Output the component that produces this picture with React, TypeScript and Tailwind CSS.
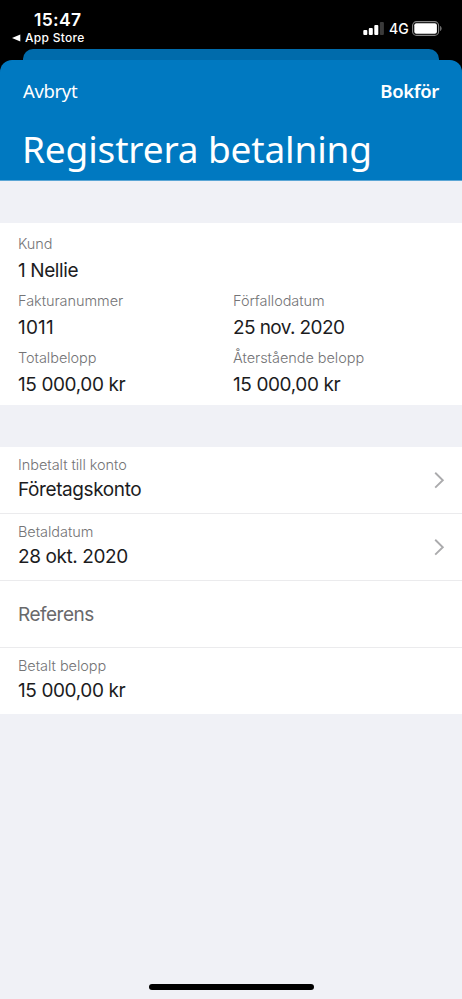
import clsx from "clsx";

const Chevron = () => {
  return (
    <svg width="12" height="18" viewBox="0 0 12 18" fill="none" className="mt-[3px] -mr-[2px] shrink-0">
      <path d="M1.2 1.8L8.8 9.2L1.2 16.6" stroke="#ababad" strokeWidth="1.9" />
    </svg>
  );
};

const StatusBar = () => {
  return (
    <div className="flex h-[49px] justify-between text-white">
      <div className="pl-3">
        <div className="pt-[10px] pl-[22px] text-[17.5px] leading-5 font-semibold tracking-[0.35px]">
          15:47
        </div>
        <div className="flex items-center text-[12px] leading-4 font-medium tracking-[0.3px]">
          <svg width="9" height="8" viewBox="0 0 9 8" className="mr-1">
            <path d="M0 4L8.3 0.6V7.4Z" fill="#fff" />
          </svg>
          App Store
        </div>
      </div>
      <div className="flex h-4 items-center mt-[20px] pr-[19px]">
        <svg width="21" height="13" viewBox="0 0 21 13">
          <rect x="0.3" y="8" width="4" height="5" rx="1" fill="#fff" />
          <rect x="5.8" y="6" width="4" height="7" rx="1" fill="#fff" />
          <rect x="11.3" y="3" width="4" height="10" rx="1" fill="#fff" />
          <rect x="16.9" y="0" width="4" height="13" rx="1" fill="#3a3a3a" />
        </svg>
        <span className="ml-[5px] w-[20px] text-[14px] font-medium">4G</span>
        <svg width="31" height="15" viewBox="0 0 31 15" className="ml-[3px]">
          <rect x="0.6" y="0.6" width="26" height="13.8" rx="4" stroke="#858585" strokeWidth="1.1" fill="none" />
          <rect x="2.3" y="2.3" width="22.6" height="10.4" rx="2" fill="#fff" />
          <path d="M28.2 5C30 5.6 30 9.4 28.2 10Z" fill="#858585" />
        </svg>
      </div>
    </div>
  );
};

type FieldProps = {
  label: string;
  value: string;
  compact?: boolean;
  valueClass?: string;
};

const Field = ({ label, value, compact, valueClass = "tracking-[-0.4px]" }: FieldProps) => {
  return (
    <div>
      <div className="text-[14.5px] leading-5 font-light tracking-[-0.05px] text-[#747476]">
        {label}
      </div>
      <div
        className={clsx(
          "text-[19px] leading-6 text-[#1c1c1e]",
          compact ? "mt-[3px]" : "mt-[5px]",
          valueClass
        )}
      >
        {value}
      </div>
    </div>
  );
};

const App = () => {
  return (
    <div className="flex h-[999px] w-[462px] flex-col overflow-hidden bg-black font-['Inter',sans-serif]">
      <StatusBar />
      <div className="mx-[23px] h-[11px] shrink-0 rounded-t-[10px] bg-[#006bab]" />
      <div className="flex grow flex-col bg-black">
        <header className="h-[121px] shrink-0 rounded-t-[12px] border-b border-[#5ba6d5] bg-[#0079c1] px-[23px] font-['Noto_Sans',sans-serif] text-white">
          <div className="flex justify-between pt-[18px] text-[18.5px] leading-[26px] tracking-[-0.35px]">
            <button>Avbryt</button>
            <button className="font-semibold">Bokför</button>
          </div>
          <h1 className="mt-[19px] -ml-px text-[37px] leading-[52px] font-[380] tracking-[-0.15px] whitespace-nowrap">
            Registrera betalning
          </h1>
        </header>
        <main className="flex grow flex-col bg-[#f0f1f6] pt-[42px]">
          <section className="grid h-[182px] grid-cols-[215px_1fr] content-start gap-y-2 bg-white px-[18px] pt-[11px]">
            <div className="col-span-2">
              <Field label="Kund" value="1 Nellie" />
            </div>
            <Field label="Fakturanummer" value="1011" valueClass="tracking-[0.2px]" />
            <Field label="Förfallodatum" value="25 nov. 2020" valueClass="tracking-[-0.6px]" />
            <Field label="Totalbelopp" value="15 000,00 kr" />
            <Field label="Återstående belopp" value="15 000,00 kr" />
          </section>
          <section className="mt-[42px] bg-white">
            <div className="flex h-[67px] items-center justify-between border-b border-[#ebebed] px-[18px] pb-[3px]">
              <Field label="Inbetalt till konto" value="Företagskonto" compact />
              <Chevron />
            </div>
            <div className="flex h-[67px] items-center justify-between border-b border-[#ebebed] px-[18px] pb-[3px]">
              <Field label="Betaldatum" value="28 okt. 2020" compact />
              <Chevron />
            </div>
            <div className="flex h-[67px] items-center border-b border-[#ebebed] px-[18px] pt-[2px] text-[19px] tracking-[-0.5px] text-[#69696b]">
              Referens
            </div>
            <div className="flex h-[66px] items-center px-[18px] pb-[3px]">
              <Field label="Betalt belopp" value="15 000,00 kr" compact />
            </div>
          </section>
          <div className="mx-auto mt-auto mb-[9px] h-[6px] w-[165px] rounded-full bg-black" />
        </main>
      </div>
    </div>
  );
};

export default App;
